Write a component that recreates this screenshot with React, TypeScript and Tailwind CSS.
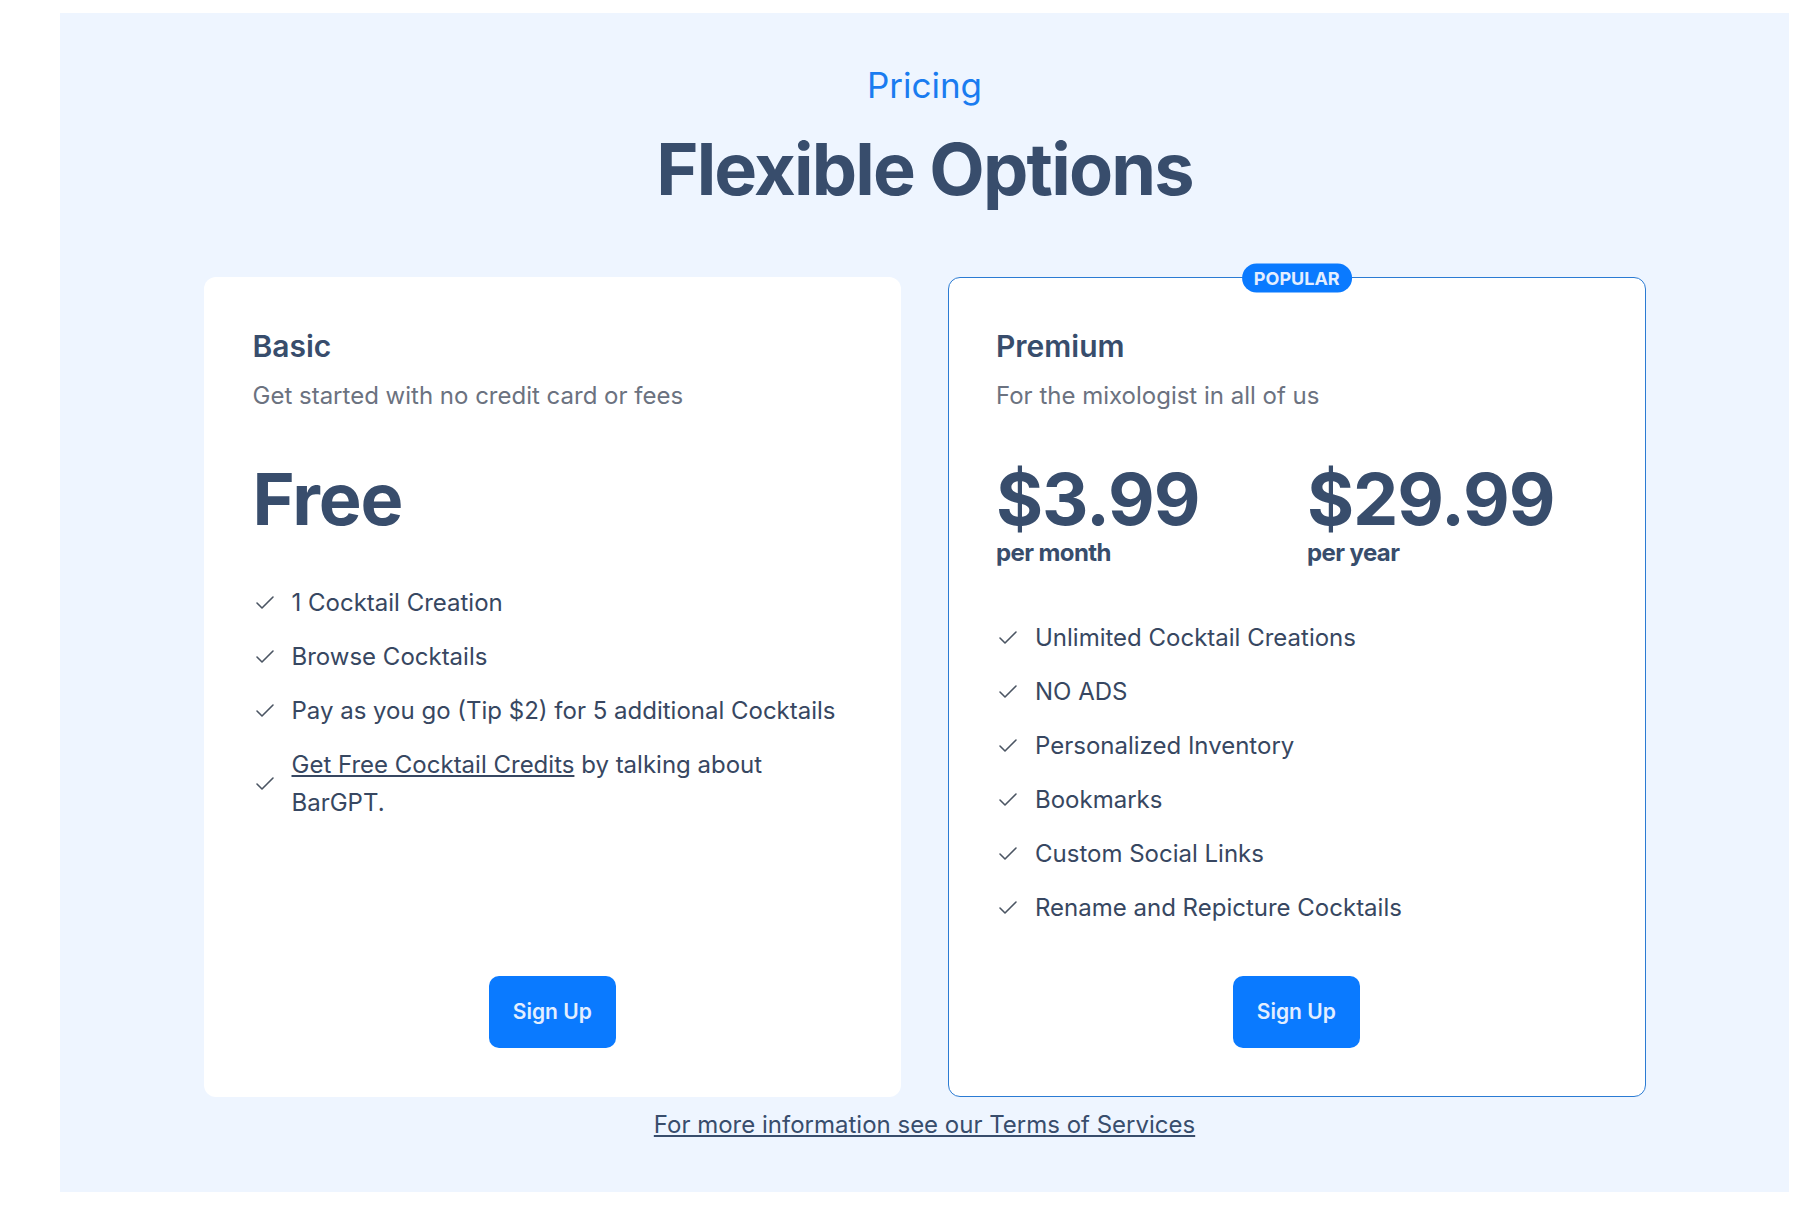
import React from "react";
import { Check } from "lucide-react";

const font = { fontFamily: "Inter, 'Noto Sans', sans-serif" };

function Feature({ children }: { children: React.ReactNode }) {
  return (
    <li className="flex items-center gap-[15px]">
      <Check size={24} strokeWidth={1.6} className="shrink-0 text-[#4b5563]" />
      <span className="text-[24px] leading-[38px] text-[#374761]">{children}</span>
    </li>
  );
}

function SignUp() {
  return (
    <div className="mt-auto flex justify-center pt-[49px]">
      <button className="h-[72px] rounded-[10px] bg-[#0a7aff] px-6 text-[21px] font-semibold text-[#e3eeff]">
        Sign Up
      </button>
    </div>
  );
}

export default function App() {
  return (
    <div className="min-h-screen bg-white pt-[13px] pl-[60px] pr-[18px] pb-[33px]" style={font}>
      <section className="flex flex-col items-center bg-[#eef5ff] pt-[52px] pb-[51px]">
        <p className="text-[35px] leading-[40px] text-[#1a7cf0]">Pricing</p>
        <h1 className="mt-[28px] text-[72px] font-bold leading-[72px] tracking-tight text-[#384d6c]">
          Flexible Options
        </h1>

        <div className="mt-[72px] grid w-[1442px] grid-cols-2 gap-[47px]">
          {/* Basic */}
          <div className="flex flex-col rounded-xl border border-transparent bg-white p-12">
            <h3 className="text-[30px] font-semibold leading-[40px] text-[#384d6c]">Basic</h3>
            <p className="mt-[14px] text-[24px] leading-[32px] text-[#6b7280]">
              Get started with no credit card or fees
            </p>
            <div className="mt-[51px] text-[72px] font-bold leading-[72px] tracking-[-0.015em] text-[#384d6c]">
              Free
            </div>
            <ul className="mt-[49px] flex flex-col gap-4">
              <Feature>1 Cocktail Creation</Feature>
              <Feature>Browse Cocktails</Feature>
              <Feature>Pay as you go (Tip $2) for 5 additional Cocktails</Feature>
              <Feature>
                <a href="#" className="underline underline-offset-2">
                  Get Free Cocktail Credits
                </a>{" "}
                by talking about BarGPT.
              </Feature>
            </ul>
            <SignUp />
          </div>

          {/* Premium */}
          <div className="relative flex flex-col rounded-xl border border-[#2b7bd3] bg-white p-12 pl-[47px]">
            <div className="absolute left-1/2 top-0 -translate-x-1/2 -translate-y-1/2 rounded-full bg-[#0a7aff] px-3 py-[4px] text-[18px] font-bold leading-[21px] text-[#e3eeff]">
              POPULAR
            </div>
            <h3 className="text-[30px] font-semibold leading-[40px] text-[#384d6c]">Premium</h3>
            <p className="mt-[14px] text-[24px] leading-[32px] text-[#6b7280]">
              For the mixologist in all of us
            </p>
            <div className="mt-[51px] flex">
              <div className="w-[311px]">
                <div className="text-[72px] font-bold leading-[72px] tracking-[-0.015em] text-[#384d6c]">$3.99</div>
                <div className="mt-[3px] text-[24px] font-bold leading-[30px] tracking-tight text-[#384d6c]">per month</div>
              </div>
              <div>
                <div className="text-[72px] font-bold leading-[72px] tracking-[-0.015em] text-[#384d6c]">$29.99</div>
                <div className="mt-[3px] text-[24px] font-bold leading-[30px] tracking-tight text-[#384d6c]">per year</div>
              </div>
            </div>
            <ul className="mt-[51px] flex flex-col gap-4">
              <Feature>Unlimited Cocktail Creations</Feature>
              <Feature>NO ADS</Feature>
              <Feature>Personalized Inventory</Feature>
              <Feature>Bookmarks</Feature>
              <Feature>Custom Social Links</Feature>
              <Feature>Rename and Repicture Cocktails</Feature>
            </ul>
            <SignUp />
          </div>
        </div>

        <a href="#" className="mt-[12px] text-[24px] leading-[32px] text-[#384d6c] underline underline-offset-2">
          For more information see our Terms of Services
        </a>
      </section>
    </div>
  );
}
